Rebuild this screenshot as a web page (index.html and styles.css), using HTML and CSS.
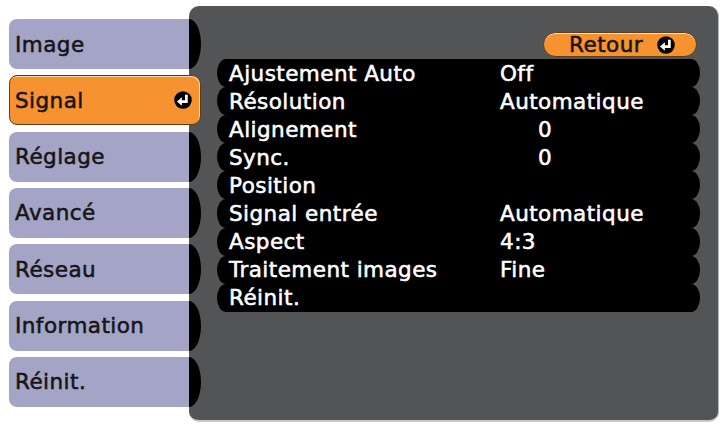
FILE: index.html
```html
<!DOCTYPE html>
<html lang="fr">
<head>
<meta charset="utf-8">
<title>Signal</title>
<link rel="stylesheet" href="styles.css">
</head>
<body>
<div class="screen">
  <nav class="tabs">
    <div class="tab">Image</div>
    <div class="tab active"><span>Signal</span>
      <svg class="enter" viewBox="0 0 16 16" width="18" height="18"><circle cx="8" cy="8" r="7.8" fill="#000"/><path d="M11 3.4V9.4H6.2" fill="none" stroke="#fff" stroke-width="2.4"/><path d="M2.6 9.4L7 5.6V13.2Z" fill="#fff"/></svg>
    </div>
    <div class="tab">Réglage</div>
    <div class="tab">Avancé</div>
    <div class="tab">Réseau</div>
    <div class="tab">Information</div>
    <div class="tab">Réinit.</div>
  </nav>
  <main class="panel">
    <div class="top">
      <div class="retour">Retour
        <svg class="enter" viewBox="0 0 16 16" width="18" height="18"><circle cx="8" cy="8" r="7.8" fill="#000"/><path d="M11 3.4V9.4H6.2" fill="none" stroke="#fff" stroke-width="2.4"/><path d="M2.6 9.4L7 5.6V13.2Z" fill="#fff"/></svg>
      </div>
    </div>
    <div class="rows">
      <div class="row"><span class="label">Ajustement Auto</span><span class="value">Off</span></div>
      <div class="row"><span class="label">Résolution</span><span class="value">Automatique</span></div>
      <div class="row"><span class="label">Alignement</span><span class="value num">0</span></div>
      <div class="row"><span class="label">Sync.</span><span class="value num">0</span></div>
      <div class="row"><span class="label">Position</span><span class="value"></span></div>
      <div class="row"><span class="label">Signal entrée</span><span class="value">Automatique</span></div>
      <div class="row"><span class="label">Aspect</span><span class="value">4:3</span></div>
      <div class="row"><span class="label">Traitement images</span><span class="value">Fine</span></div>
      <div class="row"><span class="label">Réinit.</span><span class="value"></span></div>
    </div>
  </main>
</div>
</body>
</html>
```
FILE: styles.css
```css
html, body {
  margin: 0;
  padding: 0;
  background: #ffffff;
}
body {
  font-family: "DejaVu Sans", "Liberation Sans", sans-serif;
  font-weight: normal;
  font-size: 21.5px;
  letter-spacing: 0.45px;
  -webkit-text-stroke: 0.55px currentColor;
}
.screen {
  width: 720px;
  height: 426px;
  box-sizing: border-box;
  display: flex;
  align-items: flex-start;
  padding: 6px 1px 0 9px;
}
.tabs {
  position: relative;
  z-index: 1;
  width: 192px;
  flex: none;
  display: flex;
  flex-direction: column;
  gap: 6.33px;
  padding-top: 13px;
}
.tab {
  height: 50px;
  box-sizing: border-box;
  display: flex;
  align-items: center;
  justify-content: space-between;
  padding: 0 8px 0 6px;
  color: #161616;
  background: linear-gradient(90deg, #a4a4c7 0 180px, #000 180px);
  border-radius: 8px 12px 12px 8px / 8px 25px 25px 8px;
}
.tab.active {
  background: #f6922f;
  border: 1px solid #5e3d1c;
  box-shadow: inset -1px 1px 0 #fbd2a4;
  border-radius: 8px 9px 9px 8px;
  padding-left: 5px;
}
.enter {
  display: block;
  flex: none;
}
.panel {
  flex: 1;
  margin-left: -12px;
  height: 416px;
  box-sizing: border-box;
  background: #525456;
  border-radius: 10px;
  border-bottom: 2px solid #c9c9c9;
  border-right: 1px solid #b5b5b5;
  display: flex;
  flex-direction: column;
}
.top {
  display: flex;
  justify-content: flex-end;
  padding: 26px 21px 0 0;
}
.retour {
  width: 154px;
  height: 25px;
  box-sizing: border-box;
  display: flex;
  align-items: center;
  justify-content: flex-end;
  gap: 14px;
  padding: 0 21px 0 0;
  color: #161616;
  background: #f6922f;
  border: 1px solid #5e3d1c;
  box-shadow: inset 0 1px 0 #fde2c2;
  border-radius: 13px;
}
.rows {
  margin-top: 2px;
  padding: 0 18px 0 28px;
  display: flex;
  flex-direction: column;
}
.row {
  height: 28.1px;
  display: flex;
  align-items: center;
  padding-left: 12px;
  color: #ffffff;
  background: #000000;
  border-radius: 9px / 14px;
}
.label {
  width: 271px;
  flex: none;
  white-space: nowrap;
}
.value.num {
  padding-left: 38px;
}
```
